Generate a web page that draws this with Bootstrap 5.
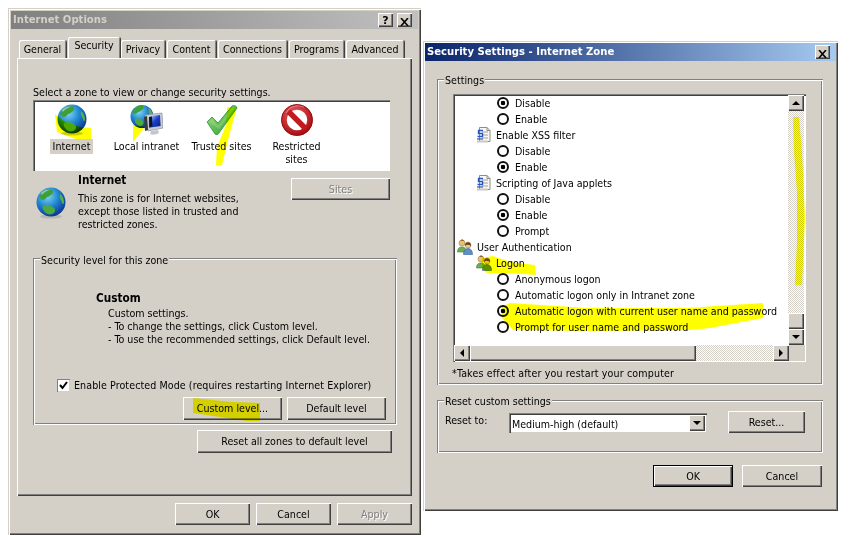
<!DOCTYPE html>
<html lang="en">
<head>
<meta charset="utf-8">
<title>Internet Options</title>
<link href="https://cdn.jsdelivr.net/npm/bootstrap@5.3.0/dist/css/bootstrap.min.css" rel="stylesheet">
<style>
html,body{height:100%;background:#fff;overflow:hidden}
body{font:10.6px/13px "DejaVu Sans Condensed","DejaVu Sans",sans-serif;color:#000}
b{font-weight:700;font-size:11.7px}
.win{position:absolute;background:#d4d0c8;padding:3px;box-shadow:inset 1px 1px 0 #d4d0c8,inset 2px 2px 0 #fff,inset -1px -1px 0 #404040,inset -2px -2px 0 #808080}
.win-a{left:8px;top:8px;width:413px;height:527px}
.win-b{left:423px;top:41px;width:415px;height:470px;padding:2px}
.ttl{height:18px;padding:0 2px;font-weight:700;font-size:11.2px;line-height:18px}
.ttl-off{background:linear-gradient(90deg,#808080,#c0c0c0);color:#d4d0c8}
.ttl-on{background:linear-gradient(90deg,#0a246a,#a6caf0);color:#fff}
.capbtn{width:15px;height:14px;background:#d4d0c8;box-shadow:inset 1px 1px 0 #fff,inset -1px -1px 0 #404040,inset -2px -2px 0 #808080;font:700 11px/13px "DejaVu Sans",sans-serif;color:#000;text-align:center;padding:0;border:0}
.capbtn svg{display:block;margin:3px 0 0 3px}
.tabrow{margin:8px 0 0 8px;height:21px;border:0;flex-wrap:nowrap;gap:2px}
.tabrow .tabx{display:block;height:18px;padding:0;line-height:18px;text-align:center;color:#000;background:#d4d0c8;box-shadow:inset 1px 1px 0 #fff,inset -1px 0 0 #808080,1px 0 0 #404040;border-radius:2px 2px 0 0;text-decoration:none;flex:none}
.tabrow .tabx.cur{height:21px;line-height:17px;width:52px;position:relative;z-index:2}
.tabrow li:nth-child(1) .tabx{width:47px}
.tabrow li:nth-child(3) .tabx{width:44px}
.tabrow li:nth-child(4) .tabx{width:49px}
.tabrow li:nth-child(5) .tabx{width:69px}
.tabrow li:nth-child(6) .tabx{width:55px}
.tabrow li:nth-child(7) .tabx{width:58px}
.tabrow li:nth-child(2){margin-right:-1px}
.pane{margin-left:6px;width:395px;height:438px;padding:28px 15px 0 16px;box-shadow:inset 1px 1px 0 #fff,inset -1px -1px 0 #404040,inset -2px -2px 0 #808080}
.sunken{background:#fff;box-shadow:inset 1px 1px 0 #808080,inset 2px 2px 0 #404040,inset -1px -1px 0 #fff}
.zones{width:357px;height:71px;margin-top:1px;padding:4px 0 0 1px;text-align:center}
.zonecell{width:75px}
.zonecell svg{display:block;margin:0 auto 4px}
.zonelab{display:inline-block;padding:0 3px}
.zonelab.sel{background:#d4d0c8;margin-top:-1px;padding:1px 3px}
.info{width:357px;margin-top:3px}
.infoicon{width:45px;padding:13px 0 0 2px}
.infotext{width:213px}
.infotext b{display:block;margin-bottom:5px}
.w95{background:#d4d0c8;border:0;border-radius:0;padding:0;font:inherit;color:#000;height:22px;box-shadow:inset 1px 1px 0 #fff,inset -1px -1px 0 #404040,inset -2px -2px 0 #808080;text-align:center}
.w95:hover,.w95:active,.w95:focus{background:#d4d0c8;color:#000}
.w95.dis,.dis{color:#808080;text-shadow:1px 1px 0 #fff}
.w95.dflt{box-shadow:0 0 0 0 #000,inset 0 0 0 1px #000,inset 2px 2px 0 #fff,inset -2px -2px 0 #404040,inset -3px -3px 0 #808080}
.sitesbtn{width:99px;margin:4px 0 0 auto}
.grp{position:relative;box-shadow:inset 1px 1px 0 #808080,inset 2px 2px 0 #fff,inset -1px -1px 0 #fff,inset -2px -2px 0 #808080}
.grplab{position:absolute;left:7px;top:-4px;background:#d4d0c8;padding:0 1px}
.grp-sec{height:167px;margin-top:27px;padding:34px 11px 0 24px}
.seclvl{padding-left:39px}
.seclvl b{display:block;margin-bottom:2px}
.seclvl div{padding-left:12px}
.chkrow{margin-top:33px;gap:4px;letter-spacing:.08px}
.fakechk{width:13px;height:13px;background:#fff;box-shadow:inset 1px 1px 0 #808080,inset -1px -1px 0 #d4d0c8;flex:none}
.fakechk svg{display:block;margin:2px}
.lvlbtns{gap:5px;margin-top:5px}
.lvlbtns .w95{width:99px;height:23px}
.resetall{width:195px;height:23px;margin:5px 5px 0 auto;display:block}
.foot-a{gap:6px;margin:7px 6px 0 0}
.foot-a .w95{width:75px}
.grp-set{margin:18px 13px 0 12px;height:306px;padding:15px 0 0 16px}
.grp-set .grplab,.grp-res .grplab{top:-5px}
.setlist{width:353px;height:268px;padding:1px 1px 0 1px;margin-bottom:5px}
.rows{width:334px;height:250px}
.rowx{height:16px;padding-top:1px;line-height:15px;white-space:nowrap;gap:4px}
.rowx svg{margin-bottom:1px;flex:none}
.l0{padding-left:3px}.l1{padding-left:22px}.l2{padding-left:43px;gap:6px}
.rdo{width:12px;height:12px;border:2px solid #111;border-radius:50%;flex:none;background:#fff;margin-bottom:1px}
.rdo.on{background:radial-gradient(circle,#000 0 2px,#fff 2.6px)}
.vbar{width:16px;height:250px}
.sbtn{width:16px;height:16px;background:#d4d0c8;box-shadow:inset 1px 1px 0 #fff,inset -1px -1px 0 #404040,inset -2px -2px 0 #808080;flex:none}
.hthumb{width:226px;height:16px;background:#d4d0c8;box-shadow:inset 1px 1px 0 #fff,inset -1px -1px 0 #404040,inset -2px -2px 0 #808080;flex:none}
.track{flex:1;background:repeating-conic-gradient(#d4d0c8 0 25%,#fff 0 50%) 0 0/2px 2px}
.hbar{height:16px}
.corner{width:16px;height:16px;background:#d4d0c8;flex:none}
.arw{width:0;height:0;border:4px solid transparent}
.arw-u{border-bottom:4px solid #000;border-top:0}
.arw-d{border-top:4px solid #000;border-bottom:0}
.arw-l{border-right:4px solid #000;border-left:0}
.arw-r{border-left:4px solid #000;border-right:0}
.note{margin-left:-1px;letter-spacing:.15px}
.grp-res{margin:15px 13px 0 12px;height:53px;padding:11px 0 0 8px}
.reslab{width:64px;margin-top:3px}
.combo{width:198px;height:20px;margin-top:2px;padding:2px 2px 2px 3px;line-height:18px;box-shadow:inset 1px 1px 0 #808080,inset 2px 2px 0 #404040,inset -1px -1px 0 #d4d0c8}
.resetbtn{width:77px;margin-left:21px}
.combo .sbtn{height:16px;margin:0 0 0 auto}
.foot-b{gap:9px;margin:12px 14px 0 0}
.foot-b .w95{width:80px}
.marks{position:absolute;left:0;top:0;width:861px;height:536px;mix-blend-mode:multiply;pointer-events:none;z-index:5}
</style>
</head>
<body>
<svg width="0" height="0" class="position-absolute" aria-hidden="true">
<defs>
<radialGradient id="gGlobe" cx=".38" cy=".3" r=".75"><stop offset="0" stop-color="#7fd6f2"/><stop offset=".5" stop-color="#1f86d0"/><stop offset="1" stop-color="#0b2f8a"/></radialGradient>
<linearGradient id="gChk" x1="0" y1="0" x2="1" y2="1"><stop offset="0" stop-color="#a8e070"/><stop offset="1" stop-color="#1f9a3c"/></linearGradient>
<linearGradient id="gScr" x1="0" y1="0" x2="1" y2="1"><stop offset="0" stop-color="#dfe8ff"/><stop offset=".5" stop-color="#1a3fd0"/><stop offset="1" stop-color="#0a1a80"/></linearGradient>
<radialGradient id="gRed" cx=".4" cy=".3" r=".8"><stop offset="0" stop-color="#f06060"/><stop offset="1" stop-color="#a80c10"/></radialGradient>
<symbol id="iGlobe" viewBox="0 0 32 32">
<ellipse cx="16" cy="29.500" rx="11" ry="2" fill="#999" opacity=".45"/>
<circle cx="16" cy="15" r="14.500" fill="url(#gGlobe)"/>
<path d="M4 10C6 5 11 2 16 2c2 1 3 3 1 5-2 1-3 3-5 3-1 2-3 3-5 3-1-1-2-2-3-3z" fill="#3e9e3a"/>
<path d="M25 7c3 2 4 6 4 9-1 2-2 1-2-1-1-2-3-5-2-8z" fill="#58b048"/>
<path d="M8 19c3-2 8-1 11 2 2 2 1 5-2 6-3 1-6 0-8-3-1-2-2-3-1-5z" fill="#4ea83e"/>
<path d="M6 6c3-3 7-4 10-3-3 0-7 2-9 5z" fill="#fff" opacity=".45"/>
</symbol>
<symbol id="iNet" viewBox="0 0 33 32">
<circle cx="12" cy="12.500" r="11.500" fill="url(#gGlobe)"/>
<path d="M2 8C4 4 8 1 12 1c2 1 2 3 1 4-2 1-3 3-5 3-1 1-3 2-4 2z" fill="#3e9e3a"/>
<path d="M5 15c3-1 6 0 8 2 1 2 0 4-2 5-3 0-5-2-6-4z" fill="#4ea83e"/>
<path d="M19 4c2 2 4 5 4 8l-3 1c-1-3-2-6-1-9z" fill="#58b048"/>
<path d="M15 11l17-2 1 15-15 3z" fill="#c8ccd4" stroke="#80868f" stroke-width=".6"/>
<path d="M14 13l3-1 1 14-3 1z" fill="#3a3a30"/>
<path d="M18.500 12.500l11.500-1.500 .6 11-11.600 1.800z" fill="url(#gScr)"/>
<path d="M19 13l3-.4 .4 10-3 .4z" fill="#101418"/>
<path d="M21 27l7-1 1 3c-3 2-7 2-9 1z" fill="#c4c6cc"/>
</symbol>
<symbol id="iChk" viewBox="0 0 32 32">
<path d="M1 18l5-5 6 6L26 2c2-1 5 0 5 2L13 29c-1 2-3 2-4 1z" fill="url(#gChk)" stroke="#2a9440" stroke-width=".8"/>
<path d="M3 18l3-3 6 6.500L27 3c1 0 2 0 2 .6L13 25z" fill="#fff" opacity=".18"/>
</symbol>
<symbol id="iNo" viewBox="0 0 32 32">
<circle cx="16" cy="16" r="13" fill="none" stroke="url(#gRed)" stroke-width="5.500"/>
<path d="M7.500 7.500l17 17" stroke="#c41a1e" stroke-width="5.500"/>
<path d="M5 9C8 3 16 0 23 3" fill="none" stroke="#fff" stroke-width="1" opacity=".4"/>
<circle cx="16" cy="16" r="15.500" fill="none" stroke="#8c0a0e" stroke-width=".8"/>
</symbol>
<symbol id="iDoc" viewBox="0 0 16 16">
<path d="M3.500 .5H11l3 3v11H3.500z" fill="#f8f8f4" stroke="#8c8c84"/>
<path d="M11 .5v3h3" fill="none" stroke="#8c8c84"/>
<path d="M1 13.500h11v2H1z" fill="#c8c8c0"/>
<path d="M6 5h6M6 8h6M6 11h6" stroke="#a0a098"/>
<path d="M7 3.500H2.500v3h4v3h-5M7 3.500" fill="none" stroke="#2a56c0" stroke-width="1.400"/>
<path d="M1 12h6" stroke="#2a56c0" stroke-width="1.200"/>
</symbol>
<symbol id="iUsers" viewBox="0 0 16 16">
<circle cx="5" cy="4" r="3" fill="#e8c070" stroke="#a88040" stroke-width=".6"/>
<path d="M4 2c-1-2 3-2 3 0z" fill="#8a6a30"/>
<path d="M.5 13c0-4 2-5 4.500-5s4 1 4 5z" fill="#6cae50" stroke="#4a8038" stroke-width=".6"/>
<circle cx="11" cy="6" r="3" fill="#f0c890" stroke="#a88040" stroke-width=".6"/>
<path d="M8 7c0-5 6-5 6 0-2-1-4-2-6 0z" fill="#5c4420"/>
<path d="M6.500 15.500c0-4 2-6 4.500-6s4.500 2 4.500 6z" fill="#5c90c8" stroke="#3a6090" stroke-width=".6"/>
</symbol>
</defs>
</svg>

<section class="win win-a">
  <div class="ttl ttl-off d-flex align-items-center">
    <span>Internet Options</span>
    <button class="capbtn ms-auto me-1" type="button">?</button>
    <button class="capbtn me-1" type="button"><svg width="9" height="8" viewBox="0 0 9 8"><path d="M1 0l7 8M8 0L1 8" stroke="#000" stroke-width="1.600" fill="none"/></svg></button>
  </div>
  <ul class="nav tabrow d-flex align-items-end">
    <li class="nav-item"><a class="tabx" href="#">General</a></li>
    <li class="nav-item"><a class="tabx cur" href="#">Security</a></li>
    <li class="nav-item"><a class="tabx" href="#">Privacy</a></li>
    <li class="nav-item"><a class="tabx" href="#">Content</a></li>
    <li class="nav-item"><a class="tabx" href="#">Connections</a></li>
    <li class="nav-item"><a class="tabx" href="#">Programs</a></li>
    <li class="nav-item"><a class="tabx" href="#">Advanced</a></li>
  </ul>
  <div class="pane">
    <div>Select a zone to view or change security settings.</div>
    <div class="zones sunken d-flex">
      <div class="zonecell"><svg width="32" height="32"><use href="#iGlobe"/></svg><span class="zonelab sel">Internet</span></div>
      <div class="zonecell"><svg width="33" height="32"><use href="#iNet"/></svg><span class="zonelab">Local intranet</span></div>
      <div class="zonecell"><svg width="32" height="32"><use href="#iChk"/></svg><span class="zonelab">Trusted sites</span></div>
      <div class="zonecell"><svg width="32" height="32"><use href="#iNo"/></svg><span class="zonelab">Restricted<br>sites</span></div>
    </div>
    <div class="info d-flex">
      <div class="infoicon"><svg width="32" height="32"><use href="#iGlobe"/></svg></div>
      <div class="infotext"><b>Internet</b>This zone is for Internet websites,<br>except those listed in trusted and<br>restricted zones.</div>
      <button class="btn w95 dis sitesbtn" type="button">Sites</button>
    </div>
    <div class="grp grp-sec">
      <span class="grplab">Security level for this zone</span>
      <div class="seclvl"><b>Custom</b><div>Custom settings.<br>- To change the settings, click Custom level.<br>- To use the recommended settings, click Default level.</div></div>
      <div class="chkrow d-flex align-items-center">
        <span class="fakechk"><svg width="9" height="9" viewBox="0 0 9 9"><path d="M1 4l2.500 3L8 1" fill="none" stroke="#000" stroke-width="2"/></svg></span>
        <span>Enable Protected Mode (requires restarting Internet Explorer)</span>
      </div>
      <div class="lvlbtns d-flex justify-content-end">
        <button class="btn w95" type="button">Custom level...</button>
        <button class="btn w95" type="button">Default level</button>
      </div>
    </div>
    <button class="btn w95 resetall" type="button">Reset all zones to default level</button>
  </div>
  <div class="foot-a d-flex justify-content-end">
    <button class="btn w95" type="button">OK</button>
    <button class="btn w95" type="button">Cancel</button>
    <button class="btn w95 dis" type="button">Apply</button>
  </div>
</section>

<section class="win win-b">
  <div class="ttl ttl-on d-flex align-items-center">
    <span>Security Settings - Internet Zone</span>
    <button class="capbtn ms-auto me-1" type="button"><svg width="9" height="8" viewBox="0 0 9 8"><path d="M1 0l7 8M8 0L1 8" stroke="#000" stroke-width="1.600" fill="none"/></svg></button>
  </div>
  <div class="grp grp-set">
    <span class="grplab">Settings</span>
    <div class="setlist sunken">
      <div class="d-flex">
        <div class="rows">
          <div class="rowx l2 d-flex align-items-center"><i class="rdo on"></i>Disable</div>
          <div class="rowx l2 d-flex align-items-center"><i class="rdo"></i>Enable</div>
          <div class="rowx l1 d-flex align-items-center"><svg width="16" height="16"><use href="#iDoc"/></svg>Enable XSS filter</div>
          <div class="rowx l2 d-flex align-items-center"><i class="rdo"></i>Disable</div>
          <div class="rowx l2 d-flex align-items-center"><i class="rdo on"></i>Enable</div>
          <div class="rowx l1 d-flex align-items-center"><svg width="16" height="16"><use href="#iDoc"/></svg>Scripting of Java applets</div>
          <div class="rowx l2 d-flex align-items-center"><i class="rdo"></i>Disable</div>
          <div class="rowx l2 d-flex align-items-center"><i class="rdo on"></i>Enable</div>
          <div class="rowx l2 d-flex align-items-center"><i class="rdo"></i>Prompt</div>
          <div class="rowx l0 d-flex align-items-center"><svg width="16" height="16"><use href="#iUsers"/></svg>User Authentication</div>
          <div class="rowx l1 d-flex align-items-center"><svg width="16" height="16"><use href="#iUsers"/></svg>Logon</div>
          <div class="rowx l2 d-flex align-items-center"><i class="rdo"></i>Anonymous logon</div>
          <div class="rowx l2 d-flex align-items-center"><i class="rdo"></i>Automatic logon only in Intranet zone</div>
          <div class="rowx l2 d-flex align-items-center"><i class="rdo on"></i>Automatic logon with current user name and password</div>
          <div class="rowx l2 d-flex align-items-center"><i class="rdo"></i>Prompt for user name and password</div>
        </div>
        <div class="vbar d-flex flex-column">
          <div class="sbtn d-flex align-items-center justify-content-center"><i class="arw arw-u"></i></div>
          <div class="track"></div>
          <div class="sbtn"></div>
          <div class="sbtn d-flex align-items-center justify-content-center"><i class="arw arw-d"></i></div>
        </div>
      </div>
      <div class="hbar d-flex">
        <div class="sbtn d-flex align-items-center justify-content-center"><i class="arw arw-l"></i></div>
        <div class="hthumb"></div>
        <div class="track"></div>
        <div class="sbtn d-flex align-items-center justify-content-center"><i class="arw arw-r"></i></div>
        <div class="corner"></div>
      </div>
    </div>
    <div class="note">*Takes effect after you restart your computer</div>
  </div>
  <div class="grp grp-res d-flex align-items-start">
    <span class="grplab">Reset custom settings</span>
    <span class="reslab">Reset to:</span>
    <div class="combo bg-white d-flex"><span>Medium-high (default)</span><div class="sbtn d-flex align-items-center justify-content-center"><i class="arw arw-d"></i></div></div>
    <button class="btn w95 resetbtn" type="button">Reset...</button>
  </div>
  <div class="foot-b d-flex justify-content-end">
    <button class="btn w95 dflt" type="button">OK</button>
    <button class="btn w95" type="button">Cancel</button>
  </div>
</section>

<svg class="marks" viewBox="0 0 861 536" aria-hidden="true">
<g fill="#ffff00">
<path d="M55 114L65 122 80 127 91 128 91 139 76 139 70 137 57 132z"/>
<path d="M133 125L145 127 133 142z"/>
<path d="M227 107L237 107 228 140 222 165 216 165 217 147 226 125z"/>
<path d="M193 398L233 402 260 403 260 421 247 421 220 417 193 413z" />
<path d="M482 258L493 256 510 262 535 265 536 275 510 273 487 273 482 268z"/>
<path d="M502 307L510 303 587 308 687 308 763 303 763 318 710 328 690 330 597 331 513 330 502 318z"/>
<path d="M793 117L799 117 802 152 805 218 802 285 795 285 797 242 797 192 794 152z"/>
</g>
</svg>
<script src="https://cdn.jsdelivr.net/npm/bootstrap@5.3.0/dist/js/bootstrap.bundle.min.js"></script>
</body>
</html>
